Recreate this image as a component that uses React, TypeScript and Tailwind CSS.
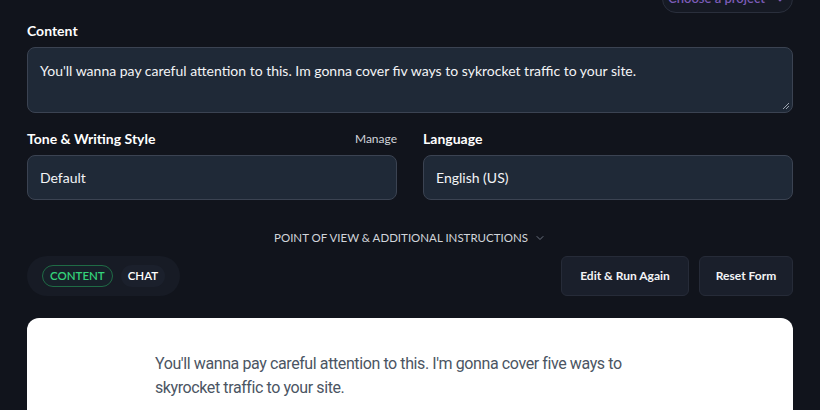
import { ChevronDown } from 'lucide-react';

export default function App() {
  return (
    <div
      className="w-[820px] h-[410px] overflow-hidden bg-[#11141c] text-white"
      style={{ fontFamily: 'Lato, "Noto Sans", sans-serif' }}
    >
      <div className="px-[27px] pb-10">
        <div className="flex justify-end -mt-[15px]">
          <button className="h-[28px] w-[131px] rounded-full border border-[#2a2f3c] bg-[#161a24] flex items-center justify-center gap-2 text-[13px] font-semibold text-[#7c5cb8]">
            Choose a project
            <ChevronDown className="w-3.5 h-3.5" strokeWidth={2.5} />
          </button>
        </div>

        <div className="mt-[8px]">
          <label className="block text-[14px] font-bold leading-5 text-white">Content</label>
          <div className="mt-[6px] relative h-[66px] rounded-lg border border-[#3b4352] bg-[#1f2937] px-3 pt-[13px] text-[14px] leading-5 text-[#f3f4f6]">
            You'll wanna pay careful attention to this. Im gonna cover fiv ways to sykrocket traffic to your site.
            <svg className="absolute right-[2px] bottom-[2px]" width="8" height="8" viewBox="0 0 8 8">
              <path d="M7 1L1 7M7 4L4 7" stroke="#9ca3af" strokeWidth="1" />
            </svg>
          </div>
        </div>

        <div className="mt-[16px] grid grid-cols-2 gap-[26px]">
          <div>
            <div className="flex items-end justify-between">
              <label className="text-[14px] font-bold leading-5">Tone &amp; Writing Style</label>
              <span className="text-[12px] text-[#d1d5db] leading-5">Manage</span>
            </div>
            <div className="mt-[6px] h-[45px] rounded-lg border border-[#3b4352] bg-[#1f2937] px-3 flex items-center text-[14px] text-[#f3f4f6]">
              Default
            </div>
          </div>
          <div>
            <label className="block text-[14px] font-bold leading-5">Language</label>
            <div className="mt-[6px] h-[45px] rounded-lg border border-[#3b4352] bg-[#1f2937] px-3 flex items-center text-[14px] text-[#f3f4f6]">
              English (US)
            </div>
          </div>
        </div>

        <div className="mt-[30px] flex items-center justify-center gap-1.5 text-[11.5px] text-[#d1d5db] leading-4">
          POINT OF VIEW &amp; ADDITIONAL INSTRUCTIONS
          <ChevronDown className="w-3 h-3 text-[#6b7280]" />
        </div>

        <div className="mt-[10px] flex items-center justify-between">
          <div className="h-[40px] rounded-full bg-[#171b25] px-[15px] flex items-center gap-2">
            <span className="h-[22px] px-[7px] rounded-full border border-[#1f6b45] bg-[#172029] flex items-center text-[11.5px] font-semibold text-[#34d27a]">
              CONTENT
            </span>
            <span className="h-[22px] px-[7px] rounded-full bg-[#1b202c] flex items-center text-[11.5px] font-semibold text-white">
              CHAT
            </span>
          </div>
          <div className="flex gap-[10px]">
            <button className="h-[40px] w-[128px] rounded-md border border-[#262b38] bg-[#1a1f2b] text-[12px] font-bold text-[#f3f4f6]">
              Edit &amp; Run Again
            </button>
            <button className="h-[40px] w-[94px] rounded-md border border-[#262b38] bg-[#1a1f2b] text-[12px] font-bold text-[#f3f4f6]">
              Reset Form
            </button>
          </div>
        </div>

        <div className="mt-[22px] rounded-xl bg-white pl-[128px] pr-[140px] pt-[34px] pb-10">
          <p className="text-[16px] leading-[24px] tracking-[-0.4px] text-[#4b5563]" style={{ fontFamily: 'Roboto, "Liberation Sans", sans-serif' }}>
            You'll wanna pay careful attention to this. I'm gonna cover five ways to skyrocket traffic to your site.
          </p>
        </div>
      </div>
    </div>
  );
}
